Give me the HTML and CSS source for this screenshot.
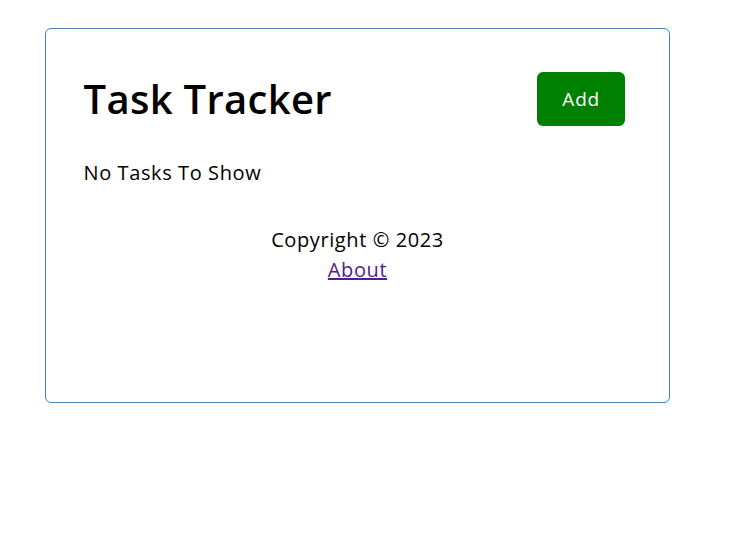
FILE: index.html
```
<!DOCTYPE html>
<html lang="en">
<head>
<meta charset="utf-8">
<title>Task Tracker</title>
<link rel="stylesheet" href="styles.css">
</head>
<body>
<div class="container">
  <header class="header">
    <h1 class="title">Task Tracker</h1>
    <button class="btn">Add</button>
  </header>
  <div class="empty">No Tasks To Show</div>
  <footer class="footer">
    <p>Copyright &copy; 2023</p>
    <a class="link" href="#about">About</a>
  </footer>
</div>
</body>
</html>
```
FILE: styles.css
```
* {
  box-sizing: border-box;
  margin: 0;
  padding: 0;
}
body {
  font-family: "Open Sans", "DejaVu Sans", sans-serif;
  font-size: 20px;
  line-height: 30px;
  letter-spacing: 0.6px;
  color: #000;
  background: #fff;
  padding: 28px 0 0 45px;
}
.container {
  width: 625px;
  min-height: 375px;
  border: 1px solid steelblue;
  border-radius: 6px;
  padding: 37px 37.5px 37.5px;
}
.header {
  display: flex;
  justify-content: space-between;
  align-items: center;
  margin-bottom: 26px;
}
.title {
  font-size: 40px;
  line-height: 60px;
  font-weight: 600;
  letter-spacing: 0.3px;
}
.btn {
  display: inline-block;
  background: green;
  color: #fff;
  border: none;
  padding: 0 25px;
  height: 54px;
  margin: 6px 6.5px;
  border-radius: 6px;
  font-family: inherit;
  font-size: 19px;
  letter-spacing: 0.8px;
  cursor: pointer;
}
.footer {
  margin-top: 37px;
  text-align: center;
}
.link {
  color: #551a8b;
}
```
